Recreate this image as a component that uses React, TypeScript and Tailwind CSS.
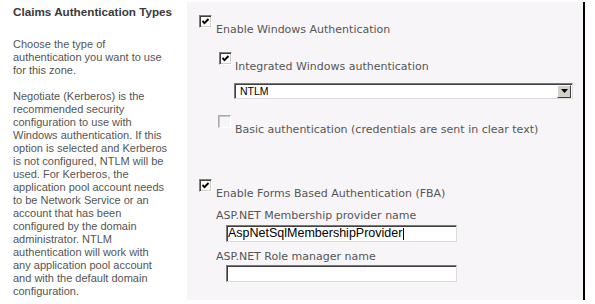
import type { ReactNode } from "react";

const intro = ["Choose the type of", "authentication you want to use", "for this zone."];

const details = [
  "Negotiate (Kerberos) is the",
  "recommended security",
  "configuration to use with",
  "Windows authentication. If this",
  "option is selected and Kerberos",
  "is not configured, NTLM will be",
  "used. For Kerberos, the",
  "application pool account needs",
  "to be Network Service or an",
  "account that has been",
  "configured by the domain",
  "administrator. NTLM",
  "authentication will work with",
  "any application pool account",
  "and with the default domain",
  "configuration.",
];

function CheckBox({ checked, dim }: { checked?: boolean; dim?: boolean }) {
  return (
    <div
      className={
        dim
          ? "h-[13px] w-[13px] shrink-0 border border-t-[#a8a8a8] border-l-[#a8a8a8] border-r-white border-b-white bg-[#f6f6f6] shadow-[inset_1px_1px_0_#c8c8c8]"
          : "h-[13px] w-[13px] shrink-0 border border-t-[#808080] border-l-[#808080] border-r-white border-b-white bg-white shadow-[inset_1px_1px_0_#404040,inset_-1px_-1px_0_#d4d0c8]"
      }
    >
      {checked && (
        <svg viewBox="0 0 11 11" className="h-[11px] w-[11px]">
          <polyline points="2.5,5 4.5,7.2 8.5,3" fill="none" stroke="#000" strokeWidth="1.9" />
        </svg>
      )}
    </div>
  );
}

function CheckRow({
  pad,
  gap,
  top,
  checked,
  dim,
  children,
}: {
  pad: string;
  gap: string;
  top: string;
  checked?: boolean;
  dim?: boolean;
  children: ReactNode;
}) {
  return (
    <div className={`flex items-start ${pad} ${top}`}>
      <CheckBox checked={checked} dim={dim} />
      <span className={`mt-[8px] whitespace-nowrap leading-[13px] ${gap}`}>{children}</span>
    </div>
  );
}

function TextBox({ value, top }: { value?: string; top: string }) {
  return (
    <div
      className={`ml-[39px] flex h-[17px] w-[231px] items-center border border-t-[#7a7a7a] border-l-[#7a7a7a] border-r-[#dcdcdc] border-b-[#dcdcdc] bg-white pl-[1px] font-['Liberation_Sans',Arial,sans-serif] text-[12.5px] leading-[15px] text-black shadow-[inset_1px_1px_0_#404040] ${top}`}
    >
      {value && (
        <>
          <span>{value}</span>
          <span className="ml-[1px] h-[12px] w-px bg-black" />
        </>
      )}
    </div>
  );
}

export default function App() {
  return (
    <div className="flex h-[304px] w-[595px] bg-white">
      <div className="w-[187px] shrink-0 px-[13px] pt-[5px] font-['Liberation_Sans',Arial,sans-serif] text-[11px] leading-[13px] text-[#555]">
        <h3 className="whitespace-nowrap text-[11.7px] font-bold leading-[13px] text-[#3a3a3a]">
          Claims Authentication Types
        </h3>
        <p className="mt-[20px] whitespace-nowrap">
          {intro.map((line) => (
            <span key={line} className="block">
              {line}
            </span>
          ))}
        </p>
        <p className="mt-[13px] whitespace-nowrap">
          {details.map((line) => (
            <span key={line} className="block">
              {line}
            </span>
          ))}
        </p>
      </div>

      <div className="mt-[2px] h-[298px] w-[398px] shrink-0 border-r-2 border-black bg-[#f8f5f8] pt-[13px] font-['DejaVu_Sans',Verdana,sans-serif] text-[11px] text-[#555]">
        <CheckRow pad="pl-[12px]" gap="ml-[4px]" top="" checked>
          Enable Windows Authentication
        </CheckRow>
        <CheckRow pad="pl-[32px]" gap="ml-[3px]" top="mt-[16px]" checked>
          Integrated Windows authentication
        </CheckRow>

        <div className="ml-[47px] mt-[10px] flex h-[16px] w-[339px] items-center border border-t-[#7a7a7a] border-l-[#7a7a7a] border-r-[#dcdcdc] border-b-[#dcdcdc] bg-white shadow-[inset_1px_1px_0_#404040]">
          <span className="flex-1 pl-[5px] font-['Liberation_Sans',Arial,sans-serif] text-[10.5px] leading-[13px] text-black">
            NTLM
          </span>
          <span className="mr-[1px] flex h-[13px] w-[14px] items-center justify-center border border-t-white border-l-white border-r-[#404040] border-b-[#404040] bg-[#d4d0c8]">
            <svg viewBox="0 0 7 4" className="h-[4px] w-[7px]">
              <polygon points="0,0 7,0 3.5,4" fill="#000" />
            </svg>
          </span>
        </div>

        <CheckRow pad="pl-[31px]" gap="ml-[4px]" top="mt-[16px]" dim>
          Basic authentication (credentials are sent in clear text)
        </CheckRow>

        <CheckRow pad="pl-[12px]" gap="ml-[4px]" top="mt-[43px]" checked>
          Enable Forms Based Authentication (FBA)
        </CheckRow>
        <div className="ml-[29px] mt-[9px] leading-[13px]">ASP.NET Membership provider name</div>
        <TextBox value="AspNetSqlMembershipProvider" top="mt-[3px]" />
        <div className="ml-[29px] mt-[8px] leading-[13px]">ASP.NET Role manager name</div>
        <TextBox top="mt-[2px]" />
      </div>
    </div>
  );
}
